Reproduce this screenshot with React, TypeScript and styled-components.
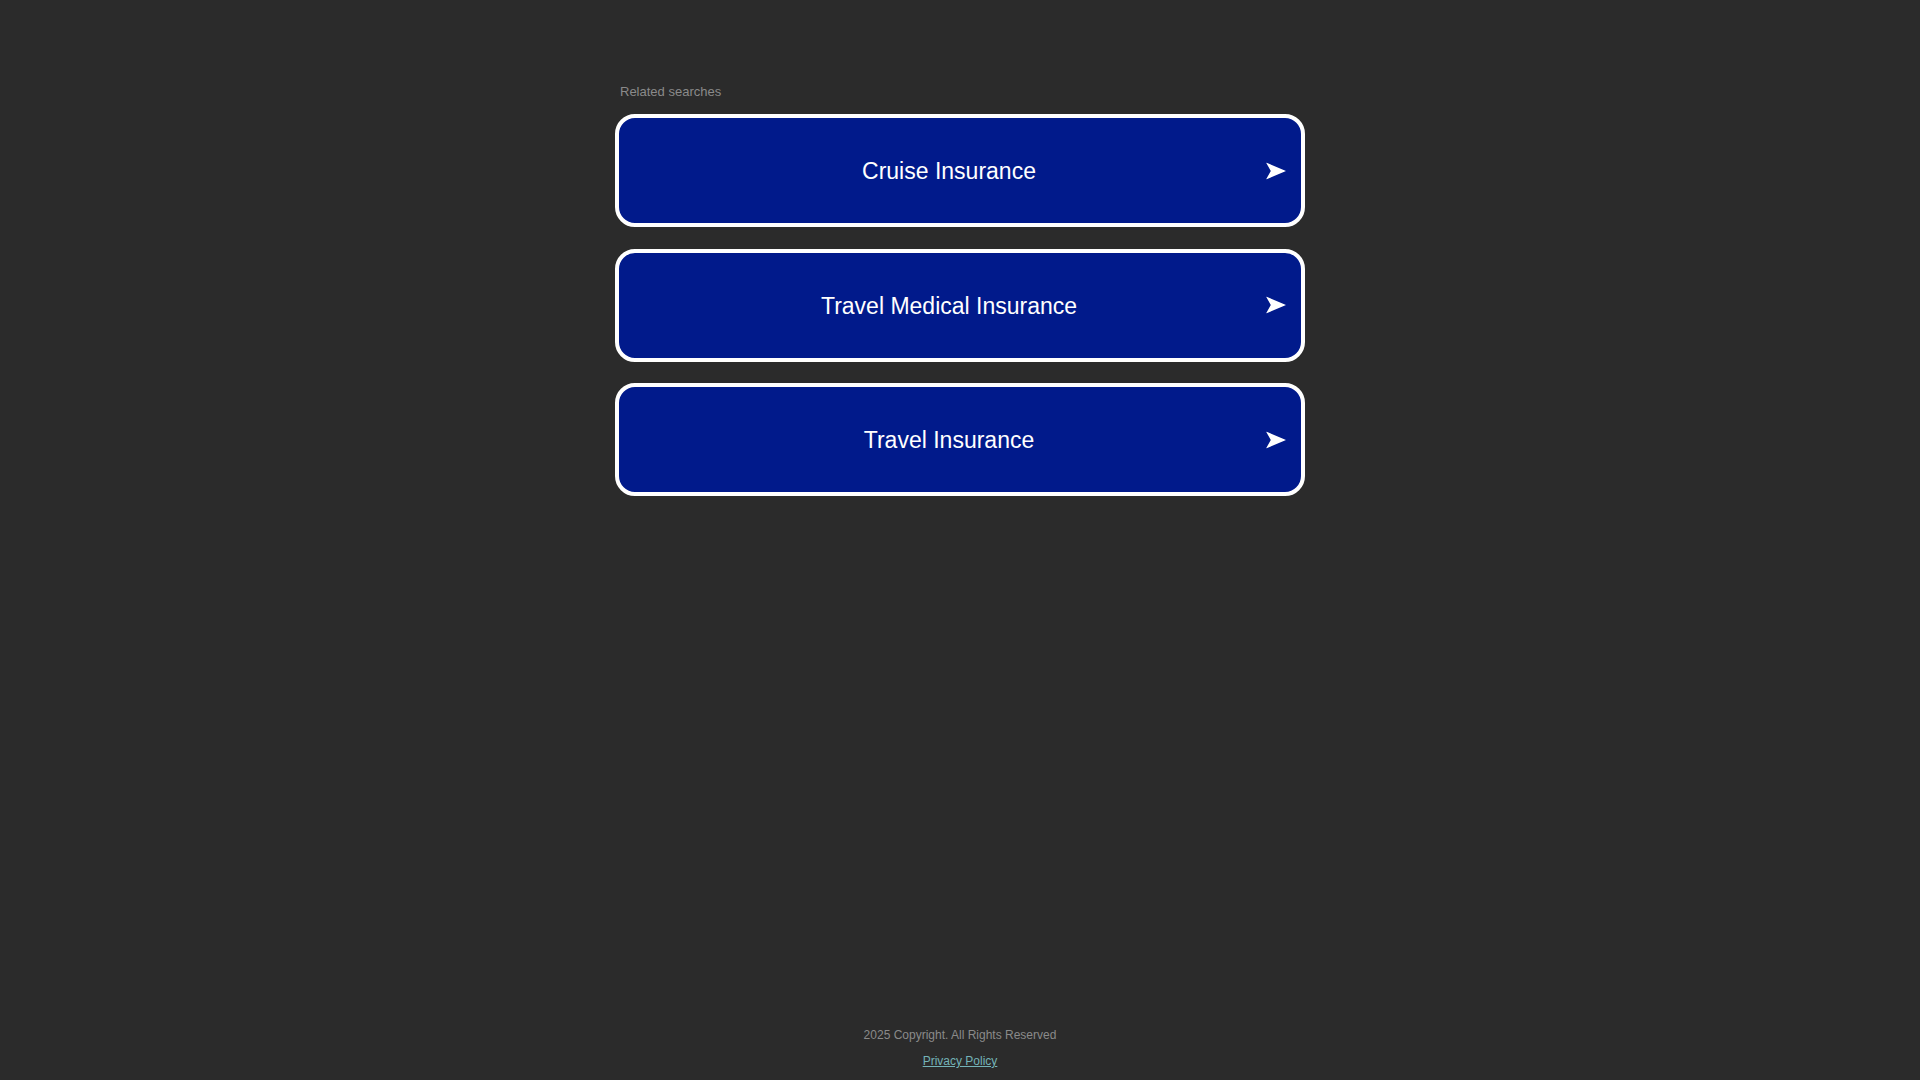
import React from "react";
import styled, { createGlobalStyle } from "styled-components";

const GlobalStyle = createGlobalStyle`
  html, body {
    margin: 0;
    padding: 0;
    background: #2b2b2b;
    font-family: "Liberation Sans", Arial, Helvetica, sans-serif;
  }
  * { box-sizing: border-box; }
`;

const Page = styled.div`
  min-height: 100vh;
  display: flex;
  flex-direction: column;
  align-items: center;
`;

const Main = styled.main`
  width: 690px;
  padding-top: 84px;
`;

const Heading = styled.div`
  font-size: 13px;
  line-height: 15px;
  color: #8a8a8a;
  padding-left: 5px;
  margin-bottom: 15px;
`;

const List = styled.div`
  display: flex;
  flex-direction: column;
  gap: 21.5px;
`;

const Card = styled.a`
  position: relative;
  display: flex;
  align-items: center;
  justify-content: center;
  height: 113px;
  padding: 2px 22px 0 0;
  border: 4px solid #ffffff;
  border-radius: 20px;
  background: #011a8b;
  color: #ffffff;
  font-size: 23px;
  text-decoration: none;
  cursor: pointer;
`;

const Arrow = styled.svg`
  position: absolute;
  right: 15px;
  top: 50%;
  width: 20px;
  height: 17px;
  transform: translateY(-50%);
`;

const Footer = styled.footer`
  margin-top: auto;
  padding-bottom: 12px;
  display: flex;
  flex-direction: column;
  align-items: center;
  gap: 12px;
  font-size: 12px;
  line-height: 14px;
`;

const Copyright = styled.div`
  color: #8a8a8a;
`;

const PolicyLink = styled.a`
  color: #74b3b8;
  text-decoration: underline;
`;

const items = ["Cruise Insurance", "Travel Medical Insurance", "Travel Insurance"];

export default function App() {
  return (
    <>
      <GlobalStyle />
      <Page>
        <Main>
          <Heading>Related searches</Heading>
          <List>
            {items.map((label) => (
              <Card key={label} href="#">
                {label}
                <Arrow viewBox="0 0 20 17" aria-hidden="true">
                  <path d="M0 0 L20 8.5 L0 17 L4.8 8.5 Z" fill="#ffffff" />
                </Arrow>
              </Card>
            ))}
          </List>
        </Main>
        <Footer>
          <Copyright>2025 Copyright. All Rights Reserved</Copyright>
          <PolicyLink href="#">Privacy Policy</PolicyLink>
        </Footer>
      </Page>
    </>
  );
}
